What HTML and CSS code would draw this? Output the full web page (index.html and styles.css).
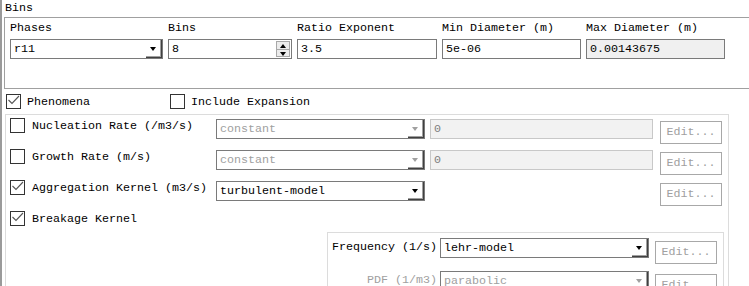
FILE: index.html
```html
<!DOCTYPE html>
<html lang="en">
<head>
  <meta charset="UTF-8">
  <title>Population Balance</title>
  <link rel="stylesheet" href="styles.css">
</head>
<body>

<div class="panel">
  <div class="title">Bins</div>
  <div class="bins-box">
    <div class="field f-phases">
      <div class="label">Phases</div>
      <div class="combo"><span class="value">r11</span><span class="drop"></span></div>
    </div>
    <div class="field f-bins">
      <div class="label">Bins</div>
      <div class="entry spin">
        <span class="value">8</span>
        <span class="spinner"><span class="up"></span><span class="down"></span></span>
      </div>
    </div>
    <div class="field f-ratio">
      <div class="label">Ratio Exponent</div>
      <div class="entry"><span class="value">3.5</span></div>
    </div>
    <div class="field f-min">
      <div class="label">Min Diameter (m)</div>
      <div class="entry"><span class="value">5e-06</span></div>
    </div>
    <div class="field f-max">
      <div class="label">Max Diameter (m)</div>
      <div class="entry readonly"><span class="value">0.00143675</span></div>
    </div>
  </div>

  <div class="phen-head">
    <div class="check first">
      <span class="box"><svg viewBox="0 0 13 13"><polyline points="1.5,5 5,8.5 12,1"/></svg></span>
      <span>Phenomena</span>
    </div>
    <div class="check">
      <span class="box"></span>
      <span>Include Expansion</span>
    </div>
  </div>

  <div class="phen-box">
    <div class="row">
      <div class="check"><span class="box"></span><span>Nucleation Rate (/m3/s)</span></div>
      <div class="combo off"><span class="value">constant</span><span class="drop"></span></div>
      <div class="cell"><div class="entry off"><span class="value">0</span></div></div>
      <div class="btn">Edit...</div>
    </div>
    <div class="row">
      <div class="check"><span class="box"></span><span>Growth Rate (m/s)</span></div>
      <div class="combo off"><span class="value">constant</span><span class="drop"></span></div>
      <div class="cell"><div class="entry off"><span class="value">0</span></div></div>
      <div class="btn">Edit...</div>
    </div>
    <div class="row">
      <div class="check"><span class="box"><svg viewBox="0 0 13 13"><polyline points="1.5,5 5,8.5 12,1"/></svg></span><span>Aggregation Kernel (m3/s)</span></div>
      <div class="combo"><span class="value">turbulent-model</span><span class="drop"></span></div>
      <div class="cell"></div>
      <div class="btn">Edit...</div>
    </div>
    <div class="row short">
      <div class="check"><span class="box"><svg viewBox="0 0 13 13"><polyline points="1.5,5 5,8.5 12,1"/></svg></span><span>Breakage Kernel</span></div>
    </div>

    <div class="sub-box">
      <div class="sub-row">
        <div class="sub-label">Frequency (1/s)</div>
        <div class="combo"><span class="value">lehr-model</span><span class="drop"></span></div>
        <div class="btn">Edit...</div>
      </div>
      <div class="sub-row">
        <div class="sub-label off">PDF (1/m3)</div>
        <div class="combo off"><span class="value">parabolic</span><span class="drop"></span></div>
        <div class="btn">Edit...</div>
      </div>
    </div>
  </div>
</div>

</body>
</html>
```

FILE: styles.css
```css
body {
  margin: 0;
  background: #fff;
  font-family: "Liberation Mono", monospace;
  font-size: 11.67px;
  color: #000;
}

.panel {
  position: relative;
  height: 286px;
  overflow: hidden;
  border-left: 2px solid #9a9a9a;
}

.panel::before {
  content: "";
  position: absolute;
  left: -2px;
  top: 42px;
  width: 1px;
  height: 18px;
  background: #3d6e9c;
}

.title {
  height: 17px;
  line-height: 17px;
  padding-left: 3px;
}

/* bins group */
.bins-box {
  box-sizing: border-box;
  height: 72px;
  margin-left: 2px;
  margin-right: -4px;
  border: 1px solid #a0a0a0;
  border-right: none;
  padding: 2px 0 0 5px;
  display: flex;
  gap: 5px;
}

.f-phases { width: 153px; }
.f-bins { width: 124px; }
.f-ratio { width: 140px; }
.f-min { width: 139px; }
.f-max { width: 139px; }

.label {
  line-height: 16px;
  height: 16px;
  margin-bottom: 3px;
  white-space: nowrap;
}

.combo, .entry {
  box-sizing: border-box;
  height: 20px;
  border: 1px solid #7a7a7a;
  background: #fff;
  display: flex;
  align-items: stretch;
}

.value {
  flex: 1;
  line-height: 18px;
  padding-left: 3px;
  white-space: nowrap;
  overflow: hidden;
}

.drop {
  position: relative;
  width: 15px;
  border-right: 1px solid #404040;
  border-bottom: 1px solid #404040;
  box-shadow: inset -1px -1px #a0a0a0;
}

.drop::after {
  content: "";
  position: absolute;
  left: 4px;
  top: 7px;
  border-left: 3.5px solid transparent;
  border-right: 3.5px solid transparent;
  border-top: 4px solid #000;
}

.combo.off { border-color: #7a7a7a; }
.combo.off .value { color: #a0a0a0; }
.combo.off .drop::after { border-top-color: #a0a0a0; }

.entry.readonly { background: #f0f0f0; }

.entry.off {
  background: #f2f2f2;
  border-color: #c8c8c8;
}
.entry.off .value { color: #808080; }

.spinner {
  width: 14px;
  display: flex;
  flex-direction: column;
  margin: 1px 1px 1px 0;
}

.spinner span {
  position: relative;
  flex: 1;
  background: #ececec;
  border: 1px solid #a8a8a8;
}

.spinner .up { border-bottom: none; }

.spinner .up::after, .spinner .down::after {
  content: "";
  position: absolute;
  left: 3px;
  border-left: 3.5px solid transparent;
  border-right: 3.5px solid transparent;
}

.spinner .up::after {
  top: 2px;
  border-bottom: 4px solid #000;
}

.spinner .down::after {
  top: 2px;
  border-top: 4px solid #000;
}

/* checkboxes */
.check {
  display: flex;
  align-items: center;
  gap: 7px;
  white-space: nowrap;
}

.box {
  box-sizing: border-box;
  width: 15px;
  height: 15px;
  border: 1px solid #333;
  background: #fff;
  display: flex;
}

.box svg {
  width: 13px;
  height: 13px;
  fill: none;
  stroke: #555;
  stroke-width: 1.1;
}

.phen-head {
  height: 25px;
  padding-left: 4px;
  display: flex;
  align-items: center;
}

.phen-head .check { gap: 6px; }
.phen-head .first { width: 164px; }

/* phenomena group */
.phen-box {
  box-sizing: border-box;
  width: 724px;
  height: 200px;
  margin-left: 3px;
  border: 1px solid #dcdcdc;
  padding: 2px 4px 0 4px;
}

.row {
  height: 31px;
  display: grid;
  grid-template-columns: 206px 209px 235px 62px;
  align-items: start;
}

.row.short { height: 22px; }

.row .check {
  height: 15px;
  margin-top: 1px;
  line-height: 16px;
}

.row .combo { margin-top: 2px; }

.cell .entry {
  width: 223px;
  margin: 2px 0 0 5px;
}

.btn {
  box-sizing: border-box;
  width: 62px;
  height: 23px;
  margin-top: 4px;
  border: 1px solid #a8a8a8;
  color: #a0a0a0;
  text-align: center;
  line-height: 21px;
}

/* breakage sub group */
.sub-box {
  box-sizing: border-box;
  width: 397px;
  height: 80px;
  margin-left: 317px;
  border: 1px solid #dcdcdc;
  padding-top: 5px;
}

.sub-row {
  height: 33px;
  display: grid;
  grid-template-columns: 112px 209px 68px;
  align-items: start;
}

.sub-label {
  text-align: right;
  padding-right: 3px;
  line-height: 19px;
  white-space: nowrap;
}

.sub-label.off { color: #a0a0a0; }

.sub-row .btn {
  margin: 3px 0 0 6px;
}
```
